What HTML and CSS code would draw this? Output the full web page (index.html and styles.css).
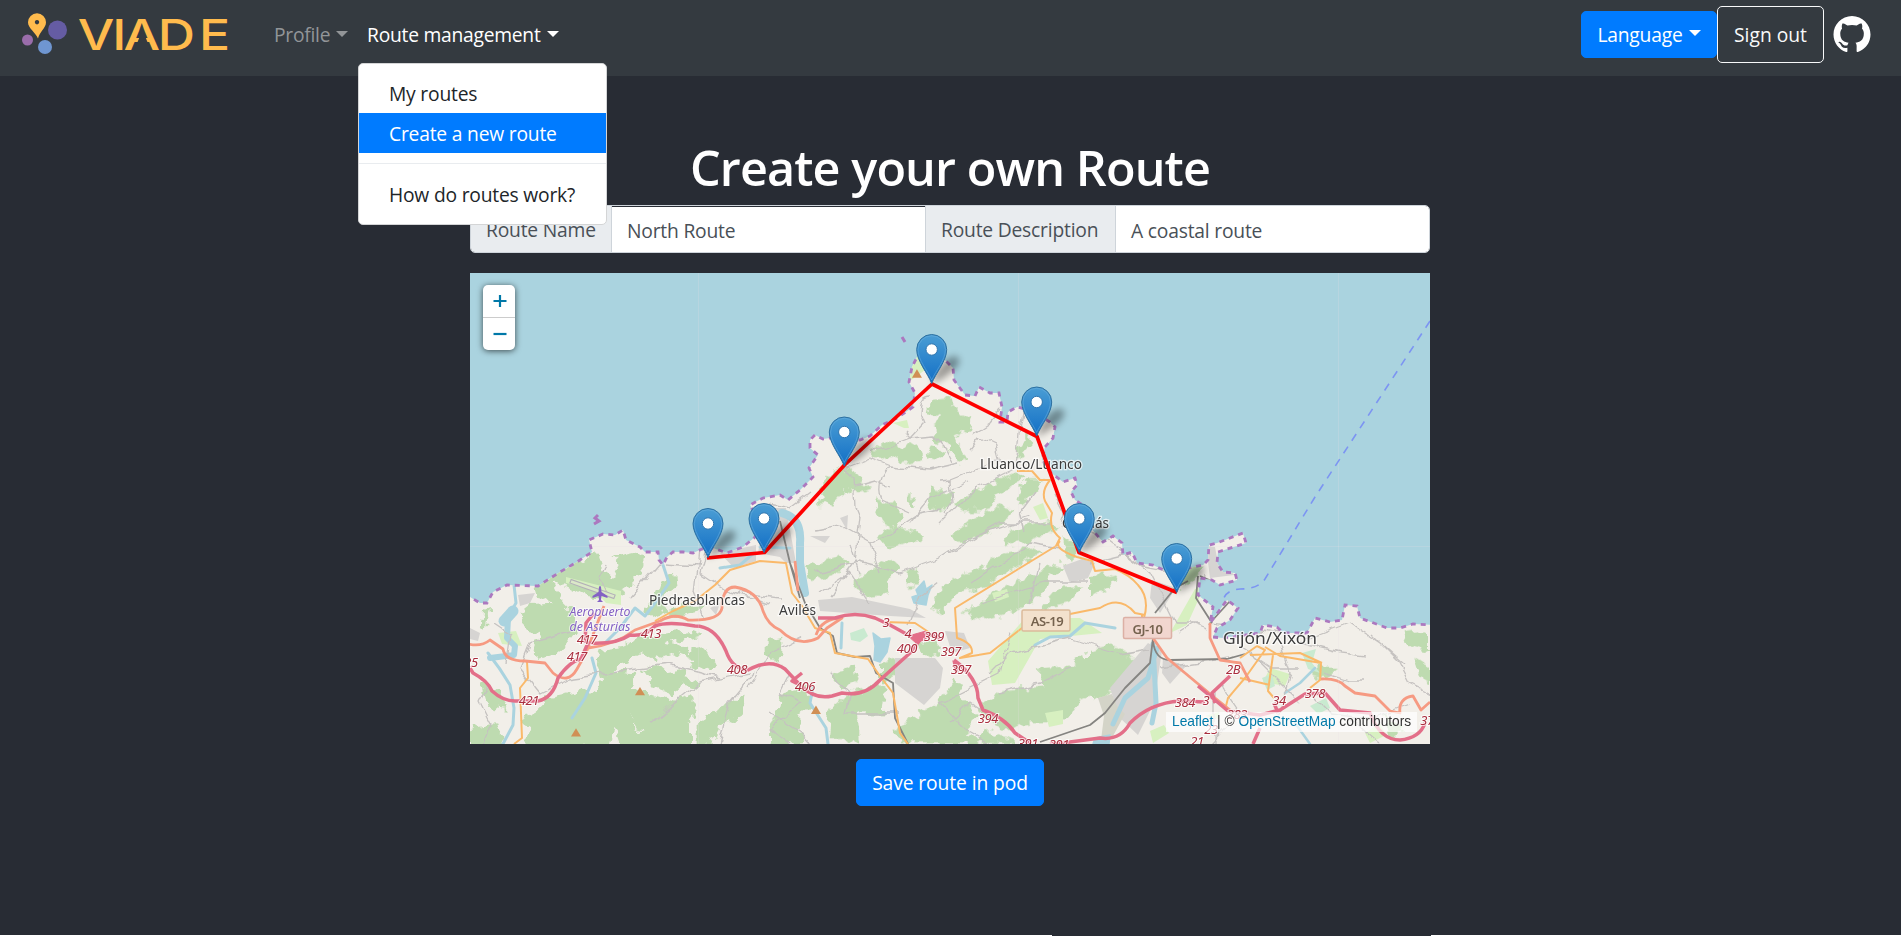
FILE: index.html
```html
<!DOCTYPE html>
<html lang="en">
<head>
<meta charset="utf-8">
<title>Viade</title>
<link rel="stylesheet" href="styles.css">
</head>
<body>
<nav class="navbar">
  <svg class="brand" width="216" height="50" viewBox="0 0 216 50" role="img" aria-label="VIADE">
    <circle cx="35.500" cy="25" r="9.500" fill="#655ca3"/>
    <circle cx="5.500" cy="35" r="5.500" fill="#9a6dab"/>
    <circle cx="23" cy="42" r="7" fill="#6f96d1"/>
    <path fill="#ffbb4d" fill-rule="evenodd" d="M15 8.300a9 9 0 0 1 9 9c0 6-6.500 9.500-8 16.300c-3-7-10-10.300-10-16.300a9 9 0 0 1 9-9zM15 15a2.200 2.200 0 1 0 .010 0z"/>
    <text class="brand-text" y="45.500" transform="scale(1.200 1)" x="46.500 75.300 84.600 113.200 147.500">VIADE</text>
    <path d="M120.500 24.500L129 46H112z" fill="#343a40"/>
  </svg>
  <div class="menu">
    <a class="menu-link profile">Profile<i class="caret"></i></a>
    <div class="menu-item">
      <a class="menu-link current">Route management<i class="caret"></i></a>
      <div class="dropdown">
        <a class="option">My routes</a>
        <a class="option active">Create a new route</a>
        <div class="divider"></div>
        <a class="option">How do routes work?</a>
      </div>
    </div>
  </div>
  <button class="btn language">Language<i class="caret"></i></button>
  <button class="btn signout">Sign out</button>
  <svg class="github" width="38" height="37" viewBox="0 0 16 16"><path fill="#fff" d="M8 0C3.580 0 0 3.580 0 8c0 3.540 2.290 6.530 5.470 7.590.4.070.55-.17.55-.38 0-.19-.01-.82-.01-1.490-2.010.37-2.530-.49-2.690-.94-.09-.23-.48-.94-.82-1.130-.28-.15-.68-.52-.01-.53.63-.01 1.080.58 1.230.82.72 1.210 1.870.87 2.330.66.070-.52.28-.87.51-1.070-1.780-.2-3.640-.89-3.640-3.950 0-.87.310-1.590.82-2.150-.08-.2-.36-1.020.08-2.120 0 0 .67-.21 2.200.82.64-.18 1.320-.27 2-.27.68 0 1.360.09 2 .27 1.530-1.040 2.200-.82 2.200-.82.44 1.100.16 1.920.08 2.120.51.56.82 1.270.82 2.150 0 3.070-1.870 3.750-3.650 3.950.29.25.54.73.54 1.480 0 1.070-.01 1.930-.01 2.200 0 .21.15.46.55.38A8.013 8.013 0 0 0 16 8c0-4.420-3.580-8-8-8z"/></svg>
</nav>
<main class="page">
  <h1>Create your own Route</h1>
  <div class="fields">
    <span class="addon name-label">Route Name</span>
    <span class="field name-field">North Route</span>
    <span class="addon desc-label">Route Description</span>
    <span class="field desc-field">A coastal route</span>
  </div>
  <section class="map">
    <svg class="map-canvas" width="960" height="471" viewBox="0 0 960 471">
      <defs>
        <path id="coast" d="M-5 322L0 324 10 330 17 330 23 319 37 312 68 313 90 299 107 289 122 279 119 267 133 261 145 262 153 257 156 267 170 274 175 279 188 279 189 287 193 292 197 284 203 279 213 279 223 280 232 276 243 275 257 280 273 274 285 264 291 252 280 232 293 225 310 222 318 227 330 217 343 204 339 195 348 182 340 175 340 167 345 162 353 166 367 164 390 167 400 163 412 152 427 145 443 134 445 120 439 109 442 94 447 84 463 80 475 87 483 95 484 107 495 122 505 123 509 114 520 120 529 120 532 134 530 149 537 149 538 139 547 134 560 137 580 149 585 154 583 165 575 174 572 187 580 199 593 209 605 205 607 212 601 219 605 227 617 235 618 252 633 269 643 263 652 270 653 282 662 279 667 290 683 292 700 300 723 294 733 292 738 287 739 272 747 270 773 260 776 270 748 279 747 290 753 299 765 300 767 307 750 312 742 307 730 305 728 322 733 326 743 334 740 350 757 327 768 335 760 347 747 355 743 364 753 365 790 360 793 352 807 354 813 360 837 360 845 345 860 349 872 347 875 332 887 333 890 345 917 355 930 355 943 351 965 352"/>
        <clipPath id="land"><path d="M-5 322L0 324 10 330 17 330 23 319 37 312 68 313 90 299 107 289 122 279 119 267 133 261 145 262 153 257 156 267 170 274 175 279 188 279 189 287 193 292 197 284 203 279 213 279 223 280 232 276 243 275 257 280 273 274 285 264 291 252 280 232 293 225 310 222 318 227 330 217 343 204 339 195 348 182 340 175 340 167 345 162 353 166 367 164 390 167 400 163 412 152 427 145 443 134 445 120 439 109 442 94 447 84 463 80 475 87 483 95 484 107 495 122 505 123 509 114 520 120 529 120 532 134 530 149 537 149 538 139 547 134 560 137 580 149 585 154 583 165 575 174 572 187 580 199 593 209 605 205 607 212 601 219 605 227 617 235 618 252 633 269 643 263 652 270 653 282 662 279 667 290 683 292 700 300 723 294 733 292 738 287 739 272 747 270 773 260 776 270 748 279 747 290 753 299 765 300 767 307 750 312 742 307 730 305 728 322 733 326 743 334 740 350 757 327 768 335 760 347 747 355 743 364 753 365 790 360 793 352 807 354 813 360 837 360 845 345 860 349 872 347 875 332 887 333 890 345 917 355 930 355 943 351 965 352V480H-5z"/></clipPath>
        <filter id="rough" x="-5%" y="-5%" width="110%" height="110%"><feTurbulence type="fractalNoise" baseFrequency=".11" numOctaves="2" seed="4"/><feDisplacementMap in="SourceGraphic" scale="14" xChannelSelector="R" yChannelSelector="G"/></filter>
        <filter id="winding" x="-5%" y="-5%" width="110%" height="110%"><feTurbulence type="fractalNoise" baseFrequency=".06" numOctaves="2" seed="9"/><feDisplacementMap in="SourceGraphic" scale="10" xChannelSelector="R" yChannelSelector="G"/></filter>
        <filter id="soft" x="-50%" y="-50%" width="200%" height="200%"><feGaussianBlur stdDeviation="3.500"/></filter>
        <linearGradient id="pinFill" x1="0" y1="0" x2="0" y2="1"><stop offset="0" stop-color="#4a9dd4"/><stop offset="1" stop-color="#126fc6"/></linearGradient>
        <g id="pin">
          <path d="M0 0L4-11Q12-26 23-28Q32-25 23-15Q12-5 0 0z" fill="#000" opacity=".36" filter="url(#soft)"/>
          <path d="M0-.5C-4-11-15-23-15-34.500A15 15 0 0 1 15-34.500C15-23 4-11 0-.5z" fill="url(#pinFill)" stroke="#2d6f9f"/>
          <path d="M0-4C-4-13-13.700-24-13.700-34.500A13.700 13.700 0 0 1 13.700-34.500C13.700-24 4-13 0-4z" fill="none" stroke="#6db1e0" stroke-opacity=".5"/>
          <circle cy="-34.500" r="5.700" fill="#fff" stroke="#3075ae"/>
        </g>
        <path id="peak" d="M0-13L15 12H-15z" fill="#d08f55"/>
      </defs>
      <path d="M0 0H960V471H0z" fill="#aad3df"/>
      <g clip-path="url(#land)">
        <path d="M0 0H960V471H0z" fill="#f2efe9"/>
        <!-- woodland -->
        <g fill="#bedbb0" filter="url(#rough)">
          <g transform="translate(0 247) scale(.33333)">
            <path d="M190 190L280 150 340 120 385 100 400 150 430 170 450 130 430 110 500 95 525 110 515 160 470 205 440 225 400 235 340 225 290 200 250 190 270 235 310 275 280 300 240 250 200 225zM580 175L615 165 620 200 570 235 590 270 540 290 520 260 560 230zM180 255L270 250 300 270 320 330 270 400 220 420 190 400 210 340 170 330 150 280zM590 270L700 255 680 275 610 290zM565 340L660 330 700 345 640 360 570 370zM390 390L460 380 500 350 560 350 600 370 650 380 660 420 610 400 560 420 520 400 440 440 400 480 380 420zM510 450L560 435 590 460 640 450 650 490 600 520 550 500zM660 395L710 385 740 430 700 450 660 430zM620 470L680 480 690 510 640 500zM30 490L90 510 110 570 50 560zM240 530L330 510 380 520 400 470 440 450 500 460 480 500 600 540 660 520 680 590 600 620 560 640 510 630 480 580 430 600 420 680H170L180 620 150 600 200 570zM0 625L80 610 110 680H0zM420 590L480 580 510 640 590 610 660 600 660 680H450zM680 610L760 560 830 520 820 580 750 620 720 680H680zM890 360L940 350 940 400 910 425 890 400zM930 520L1010 500 1020 560 960 610 920 600zM40 270L60 260 50 330 30 320z"/>
          </g>
          <g transform="translate(300 107) scale(.33333)">
            <path d="M480 60L545 55 555 90 610 110 600 150 560 170 575 210 600 235 560 250 540 195 500 190 490 150 510 110 470 100zM300 210L350 185 400 200 440 190 460 240 400 250 380 230 330 245zM480 195L540 215 520 240 470 230zM160 290L240 260 270 300 310 325 260 340 225 330 190 370 140 375 160 340zM310 355L370 370 400 400 380 450 340 430zM480 320L550 340 530 380 500 395 470 370zM410 350L440 350 430 380zM320 470L370 440 440 450 460 470 400 490 350 510zM550 370L680 300 745 275 760 300 680 350 650 390 580 390zM540 470L600 420 680 380 730 390 700 430 640 470 560 485zM770 300L820 300 780 350 740 380 750 330zM720 450L840 420 870 440 780 480 700 500zM110 560L200 530 240 550 190 590 120 600zM260 590L360 530 390 560 350 600 360 640 290 650 250 620zM410 570L440 570 450 620 410 620zM480 680L540 600 620 570 720 510 780 500 820 510 740 560 650 620 560 640 510 700zM580 700L680 630 760 600 860 550 900 560 840 590 820 640 740 690 640 720zM870 620L940 620 900 670 810 690zM0 780L40 800 30 850 0 840zM190 880L250 860 260 900 210 930zM440 790L500 790 520 820 460 830zM330 850L400 830 390 880 330 910zM180 990L250 930 350 920 340 1000 260 1000 270 1080H170zM370 1050L480 980 560 900 580 960 620 1000 590 1060 640 1090H400zM620 990L700 930 820 920 800 870 900 860 940 820 1000 850 1060 870 1000 930 930 960 880 1030 780 1030 700 1050zM30 1000L90 1010 100 1090H0V1040zM740 210L775 160 790 190 750 235zM880 470L920 500 900 540zM640 1050L740 1080V1092H620z"/>
          </g>
          <g transform="translate(620 227) scale(.33333)">
            <path d="M0 240L40 220 80 235 50 270 0 290zM0 450L60 430 130 470 160 500 130 540 60 580 0 600zM270 200L340 200 310 240 270 270zM940 400L1020 390V460L960 440zM970 470L1020 500V550L990 530zM680 500L750 500 700 540 660 530zM880 640L940 690 900 720z"/>
          </g>
        </g>
        <!-- meadows and parks -->
        <g fill="#d7f0c0">
          <path d="M96 304l55 14 0 14-15-2-12-14-28-6zM440 85l12-2 3 14-15 11zM423 150l14-3 2 8-5 0zM28 360l18-2 6 15-20-2zM563 234l10-4 5 15-8 2zM555 345L610 345 632 360 570 366 545 410 522 412 518 388zM700 360l25-44 10-4-18 40zM800 395l20 6-5 12-22-4zM522 320l15-4 2 8-14 5zM575 440l18-3 0 14-14 3zM680 458l14-6 5 8-16 10zM895 460l15-10 6 12-16 8zM735 443l14-4 0 7z"/>
        </g>
        <g fill="#c9ead0"><path d="M380 360l14-5 4 8-8 6-9-2zM832 380l14-4-4 14 8 10-12-4zM792 405l10-4 3 12-8 4zM840 433l16-8 4 10-12 6z"/></g>
        <!-- built-up areas -->
        <g fill="#d6d4d2">
          <path d="M250 280L286 272 286 288 264 295zM296 235L316 235 326 290 316 290 310 284 288 280zM348 327L382 324 440 336 456 345 420 343 350 338zM425 385L465 385 473 395 470 415 454 432 425 410zM593 293L612 286 625 290 618 305 600 310zM682 307L706 315 690 340 680 325zM678 370L692 378 684 430 668 462 650 445 640 415zM475 358L494 360 500 375 482 380zM48 322L65 320 60 330 50 333zM340 263L360 263 355 270zM370 245L378 242 377 257zM240 335L250 330 246 342zM693 385L716 393 700 411 692 400zM736 273L745 274 748 290 765 302 740 305zM0 355L10 360 8 368 0 366z"/>
        </g>
        <path fill="#d4d4c8" d="M628 425l14-4 5 12 8 8-12 22-12 4 3-24z"/>
        <!-- rivers and reservoirs -->
        <g fill="none" stroke="#aad3df" stroke-linecap="round" stroke-linejoin="round">
          <path stroke-width="8" d="M312 240Q332 245 330 270L330 290 335 320"/>
          <path stroke-width="11" d="M43 338L34 348"/><path stroke-width="6" d="M38 345L37 365 45 373 44 382 20 385"/>
          <path stroke-width="3" d="M44 312L46 330 40 340M18 380Q30 395 40 412L44 435 43 452 33 471M122 385L126 400 115 425 102 445M193 292L199 310 185 330 175 343 165 335 150 355 135 370M284 280L270 292 250 295M290 274L320 275M343 415L340 430 356 455 358 471M372 350L371 375M565 372L580 364 600 363 615 350 645 355"/>
          <path stroke-width="5" d="M687 375L678 405 655 425 643 451M683 371L686 430 682 450"/>
          <path stroke-width="2.500" d="M825 450L840 471M815 420L830 410 845 395"/>
          <path fill="#aad3df" stroke-width="1.500" d="M446 317l8-9 2 8 6-4-4 10-2 10-12-2-2-6 6-2zM403 360l8 6 9-1-3 14-7 10-6-2 1-14zM625 465l15-3-1 9h-16z"/>
        </g>
        <!-- minor roads -->
        <g fill="none" stroke="#c5c2c0" stroke-width="1.300" stroke-linejoin="round" filter="url(#winding)">
          <path d="M462 124Q450 124 450 140L454 150 440 165 435 160M400 180L440 165 463 163 475 175 483 190M374 195L384 205 386 235 390 245M374 195L400 185 420 193 460 197 490 190M420 193Q405 210 412 227L440 240M386 213L404 208 420 214M300 231L320 235 340 220M470 208L480 207 510 195 530 187M480 207L482 230 475 240M470 250L505 215 545 195 548 160 552 140M500 178L510 165 525 172 530 190M532 135L520 150 505 160M345 258L370 253 400 270 420 260 450 240 470 236M345 300L390 290 430 300 470 285 500 265 560 245M390 245L385 290 360 325M350 320L380 300 400 330M440 350L450 325 470 310M230 276L225 320 235 345M135 290L130 305 140 320M195 290L230 292M160 325L190 290M100 360L60 370 50 395 70 420 100 405 150 398 200 392 250 405M180 450L230 410 280 400M235 280L230 300 260 320 300 330M270 320L310 325M25 350L40 360 36 390M20 410L10 430 20 450 12 471M280 415L300 380 330 365M285 400L260 430 250 471M320 400L310 420 330 430 300 455 320 471M360 400L380 420 375 440 400 440 430 440M470 430L500 460 520 471M440 250L460 225 500 210M480 280L530 250 580 250M500 310L560 270 590 275M510 330L575 310 620 310M570 290L560 330M520 400L540 380 600 365 650 380 680 375M530 420L570 410 600 395M635 265L670 292 710 300M650 278L680 300 705 350 730 350M620 290L660 280M605 250L630 260M565 220L550 240 555 260M585 220L595 240 590 255M480 450L500 430 530 450M710 360L725 350 738 355M690 395L760 385M760 350L800 345M740 350L780 355 840 365 880 350 910 370 935 392M830 370L870 380 895 383M855 400L880 408 895 408M735 300L730 325M540 360L530 400 470 430M750 410L770 440 740 471M780 380L830 430M770 375L800 395 830 395M810 370L820 400 810 440M840 420L860 440 900 445 940 430M880 445L910 471M745 420L745 471M900 360L930 390 940 410 960 420M380 270L390 300M400 270L410 300M300 440L330 460 340 471"/>
        </g>
        <path d="M100 308L145 324" fill="none" stroke="#b3b0b8" stroke-width="5"/><path d="M101 308.500L144 323.500" fill="none" stroke="#dbe8c8" stroke-width="2.500"/>
        <!-- railways -->
        <g fill="none" stroke="#858481" stroke-width="1.800" stroke-linejoin="round"><path d="M310 248L320 290 335 330 350 355 363 363 367 380 385 384 400 383 406 400 423 410 425 445 438 471M320 290L330 325"/><path d="M683 365L680 390 655 415 635 440 620 452 570 469M683 368Q685 387 700 387L757 386 775 381"/><path d="M728 303L726 325 742 350M718 308L705 315 685 340M740 350L760 328M730 303L744 309 743 317"/></g>
        <!-- secondary roads -->
        <g fill="none" stroke="#fab96a" stroke-width="2" stroke-linejoin="round"><path d="M185 348L203 338 225 328 245 312 260 297 290 288 316 290 322 320 332 333 345 355 360 360 365 380 398 386 410 403 423 420 430 460 438 471M57 389L58 405 50 415 52 465 44 471M415 349L445 350 460 360M547 198L562 198 570 207 580 207Q571 218 575 228L582 240Q578 255 590 265L586 273 550 295 485 335 487 365Q503 370 502 380L490 385 520 380 552 355 600 341 630 335Q650 322 665 340L675 342M590 268Q582 275 607 284L622 288 625 298 645 296Q660 302 668 312 680 325 674 345M672 342L672 365M755 437L758 425 775 405 795 377 787 373 770 385M795 374L810 383 851 390 850 407 840 415M803 382L798 418 804 425M780 382L830 380 852 390M770 405L800 412"/></g>
        <!-- primary roads -->
        <g fill="none" stroke="#f69a82" stroke-width="2.800" stroke-linejoin="round"><path d="M-5 370Q10 375 20 367L33 376Q35 388 55 388L75 390 83 400Q98 412 107 396L116 380 134 333M118 375Q145 372 165 357L190 348Q205 339 218 347 250 348 252 335 252 314 265 314 288 318 293 338 298 352 310 357 328 375 348 365L357 355 372 345Q352 345 346 362M325 288L328 318M683 365L697 385 715 400 745 425 760 437M740 350L740 365 750 387 770 390 780 409M851 406Q868 405 875 413L885 420 905 423 920 438 930 440Q928 425 943 423L951 437 960 429"/></g>
        <!-- motorways -->
        <g fill="none" stroke="#e36f89" stroke-width="3.500" stroke-linejoin="round"><path d="M-5 387L3 400Q18 408 22 418 33 428 45 428H68Q83 425 88 405 100 388 111 386L118 370Q145 372 160 362 175 364 185 353 198 348 225 353 245 353 256 378 262 396 278 397 300 385 315 396L330 412Q345 427 362 423L372 420Q395 424 410 407L440 380 453 363M348 345L365 345Q385 338 405 345L420 352 440 363 462 362 470 366M115 370L116 350 124 340M330 412L322 408 332 400M484 387Q508 405 508 425L513 437Q535 445 545 460L560 470M484 387L487 400M580 471L600 469 630 465Q650 468 660 450 680 430 710 428L735 429M728 413L745 427 758 438 790 442 810 437 835 421 855 420 870 437 900 440Q910 467 930 467 950 465 955 450M760 403L742 420 745 430M790 455L783 471M804 430L808 440"/><path d="M438 363l18-5 0 8-10 4z" fill="#e36f89" stroke-width="1"/></g>
      </g>
      <path d="M228.500 0V471M548.500 0V471M868.500 0V471M0 273.500H960" fill="none" stroke="#e9dfe4" stroke-opacity=".22"/>
      <use href="#coast" fill="none" stroke="#ac78bf" stroke-width="2.800" stroke-dasharray="5 5"/>
      <path d="M124 251l5-3-4-3 3-3M432 64l3 5" fill="none" stroke="#ac78bf" stroke-width="3"/>
      <path d="M960 48L845 224 795 306Q788 316 770 316 755 317 753 328" fill="none" stroke="#7c94f2" stroke-width="1.600" stroke-dasharray="8 7"/>
      <path transform="translate(130 321)" fill="#8461c4" d="M-1-7Q0-9 1-7L1.500-2 7.500 2V4L1.500 2 1 6 3 8H-3L-1 6-1.500 2-7.500 4V2L-1.500-2z"/>
      <g transform="scale(.3333)"><use href="#peak" x="1341" y="302"/><use href="#peak" x="510" y="1255"/><use href="#peak" x="318" y="1379"/><use href="#peak" x="1038" y="1311"/></g>
      <g class="place" text-anchor="middle">
        <text x="227" y="331.500" textLength="96" lengthAdjust="spacingAndGlyphs">Piedrasblancas</text>
        <text x="327.500" y="342" textLength="37" lengthAdjust="spacingAndGlyphs">Avilés</text>
        <text x="561" y="195.500" textLength="102" lengthAdjust="spacingAndGlyphs">Lluanco/Luanco</text>
        <text x="615.500" y="255" textLength="47" lengthAdjust="spacingAndGlyphs">Candás</text>
        <text class="city" x="800" y="371" textLength="94" lengthAdjust="spacingAndGlyphs">Gijón/Xixón</text>
      </g>
      <g class="airport" text-anchor="middle"><text x="130" y="342.500" textLength="61" lengthAdjust="spacingAndGlyphs">Aeropuerto</text><text x="130" y="358" textLength="61" lengthAdjust="spacingAndGlyphs">de Asturias</text></g>
      <g class="road-no" text-anchor="middle">
        <text x="1" y="394">25</text><text x="59" y="432">421</text><text x="107" y="388">417</text><text x="117" y="371">417</text><text x="181" y="365">413</text><text x="267" y="401">408</text><text x="335" y="418">406</text><text x="416" y="354">3</text><text x="438" y="365">4</text><text x="464" y="368">399</text><text x="437" y="380">400</text><text x="481" y="383">397</text><text x="491" y="401">397</text><text x="518" y="450">394</text><text x="558" y="475">391</text><text x="589" y="476">391</text><text x="715" y="434">384</text><text x="736" y="432">3</text><text x="763" y="401">2B</text><text x="809" y="432">34</text><text x="845" y="425">378</text><text x="767" y="446">383</text><text x="741" y="461">23</text><text x="727" y="473">21</text><text x="957" y="452">37</text>
      </g>
      <g class="shield" text-anchor="middle"><rect x="552" y="337" width="48" height="21" rx="1.500" fill="#f3e1cd" stroke="#dcbb9b" stroke-width="1.500"/><text x="577" y="353">AS-19</text><rect x="653.500" y="344.500" width="48" height="21" rx="1.500" fill="#f1d6cf" stroke="#dcb0a5" stroke-width="1.500"/><text x="677.500" y="360.500">GJ-10</text></g>
      <polyline points="237,285 294.500,279.500 374.500,192 462,111 567,163.500 609,279.500 707,319.500" fill="none" stroke="#f00" stroke-width="3.700" stroke-linejoin="round"/>
      <use href="#pin" x="461.700" y="111"/><use href="#pin" x="566.700" y="163.500"/><use href="#pin" x="374.300" y="193.500"/><use href="#pin" x="294" y="280"/><use href="#pin" x="609.300" y="280"/><use href="#pin" x="238" y="285"/><use href="#pin" x="706.700" y="320"/>
    </svg>
    <div class="zoom-control">
      <a><svg width="14" height="14" viewBox="0 0 14 14"><path d="M0.500 7H13.500M7 1V13" stroke="#0078a8" stroke-width="2.200"/></svg></a>
      <a><svg width="14" height="14" viewBox="0 0 14 14"><path d="M0.500 7H13.500" stroke="#0078a8" stroke-width="2.200"/></svg></a>
    </div>
    <div class="attribution"><a>Leaflet</a> | © <a>OpenStreetMap</a> contributors</div>
  </section>
  <button class="btn save">Save route in pod</button>
</main>
<div class="page-end"><span></span><span></span></div>
</body>
</html>
```

FILE: styles.css
```css
* { box-sizing: border-box; }
body { margin: 0; height: 936px; overflow: hidden; display: flex; flex-direction: column; background: #282c34; color: #fff; font-family: "Open Sans", "Noto Sans", sans-serif; font-size: 19.250px; line-height: 30px; letter-spacing: -.2px; }
.navbar { height: 76px; flex: none; display: flex; align-items: flex-start; padding-left: 22px; padding-right: 29px; background: #343a40; }
.brand { margin-top: 5px; overflow: visible; }
.brand-text { font-family: Inter, sans-serif; font-size: 43px; font-weight: 500; letter-spacing: 0; fill: #ffbb4d; }
.menu { display: flex; flex: 1; margin-left: 36px; padding-top: 20px; }
.menu-link { display: flex; align-items: center; white-space: nowrap; letter-spacing: -.25px; }
.profile { width: 94px; color: #929598; }
.menu-item { position: relative; margin-left: -1px; }
.caret { width: 0; height: 0; margin-left: 6px; margin-top: -3px; border: 6px solid transparent; border-top-color: currentColor; border-bottom: 0; }
.dropdown { position: absolute; z-index: 5; left: -9px; top: 43px; width: 249px; height: 162px; padding: 9px 0; border: 1px solid #d4d5d6; border-radius: 5px; background: #fff; }
.option { display: block; height: 40px; padding: 6px 0 4px 30px; color: #212529; white-space: nowrap; }
.option.active { background: #007bff; color: #fff; }
.divider { height: 1px; margin: 10px 0; background: #e9ecef; }
.btn { display: flex; align-items: center; justify-content: center; padding: 0; border: 1px solid #007bff; border-radius: 5px; background: #007bff; color: #fff; font: inherit; letter-spacing: inherit; white-space: nowrap; }
.language { width: 136px; height: 47px; margin-top: 11px; }
.signout { width: 107px; height: 57px; margin-top: 6px; border-color: #f8f9fa; background: transparent; color: #f8f9fa; letter-spacing: 0; }
.github { margin: 16px 0 0 9px; }
.navbar .github { margin-right: 1px; }
.page { flex: 1; display: flex; flex-direction: column; align-items: center; padding-top: 61px; padding-right: 1px; }
h1 { margin: 0 0 8px; font-size: 48.500px; line-height: 60px; font-weight: 600; letter-spacing: -.88px; white-space: nowrap; }
.fields { display: flex; width: 960px; height: 48px; border: 1px solid #ced4da; border-radius: 5px; overflow: hidden; white-space: nowrap; }
.fields > span { padding: 9px 15px; border-right: 1px solid #ced4da; }
.addon { background: #e9ecef; color: #495057; }
.fields .field { padding-top: 10px; background: #fff; color: #495057; }
.fields .name-label { width: 141px; }
.fields .name-field { width: 314px; box-shadow: inset 0 1px #282c34; }
.fields .desc-label { width: 190px; }
.fields .desc-field { flex: 1; border-right: 0; }
.map { position: relative; width: 960px; height: 471px; margin-top: 20px; overflow: hidden; }
.map-canvas { display: block; }
.place { font-family: "Noto Sans", sans-serif; font-size: 14px; letter-spacing: 0; fill: #3c3c3c; paint-order: stroke; stroke: #ffffffb0; stroke-width: 2.500px; }
.city { font-size: 17px; }
.airport { font: italic 13px/1 "Noto Sans", sans-serif; letter-spacing: 0; fill: #8461c4; paint-order: stroke; stroke: #ffffffa0; stroke-width: 2px; }
.road-no { font: italic 13px/1 "Noto Sans", sans-serif; letter-spacing: -.4px; fill: #a92d3d; paint-order: stroke; stroke: #ffffffc0; stroke-width: 2px; }
.shield { font: 600 13px/1 "Noto Sans", sans-serif; letter-spacing: -.5px; fill: #75624e; }
.zoom-control { position: absolute; left: 13px; top: 12px; width: 32px; height: 65px; border-radius: 5px; background: #fff; box-shadow: 0 1px 6px rgba(0,0,0,.65); }
.zoom-control a { display: flex; height: 32px; align-items: center; justify-content: center; padding-left: 2px; }
.zoom-control a + a { height: 33px; border-top: 1px solid #ccc; }
.attribution { position: absolute; right: 13px; bottom: 12px; width: 251px; height: 20px; padding-left: 6px; background: rgba(255,255,255,.7); color: #333; font: 13.750px/19px "Liberation Sans", Arial, sans-serif; letter-spacing: 0; white-space: nowrap; }
.attribution a { color: #0078a8; }
.save { width: 188px; height: 47px; margin-top: 15px; letter-spacing: -.1px; }
.page-end { display: flex; justify-content: space-between; height: 1px; flex: none; }
.page-end span { width: 1052px; background: #fff; }
.page-end span + span { width: 470px; }
```
